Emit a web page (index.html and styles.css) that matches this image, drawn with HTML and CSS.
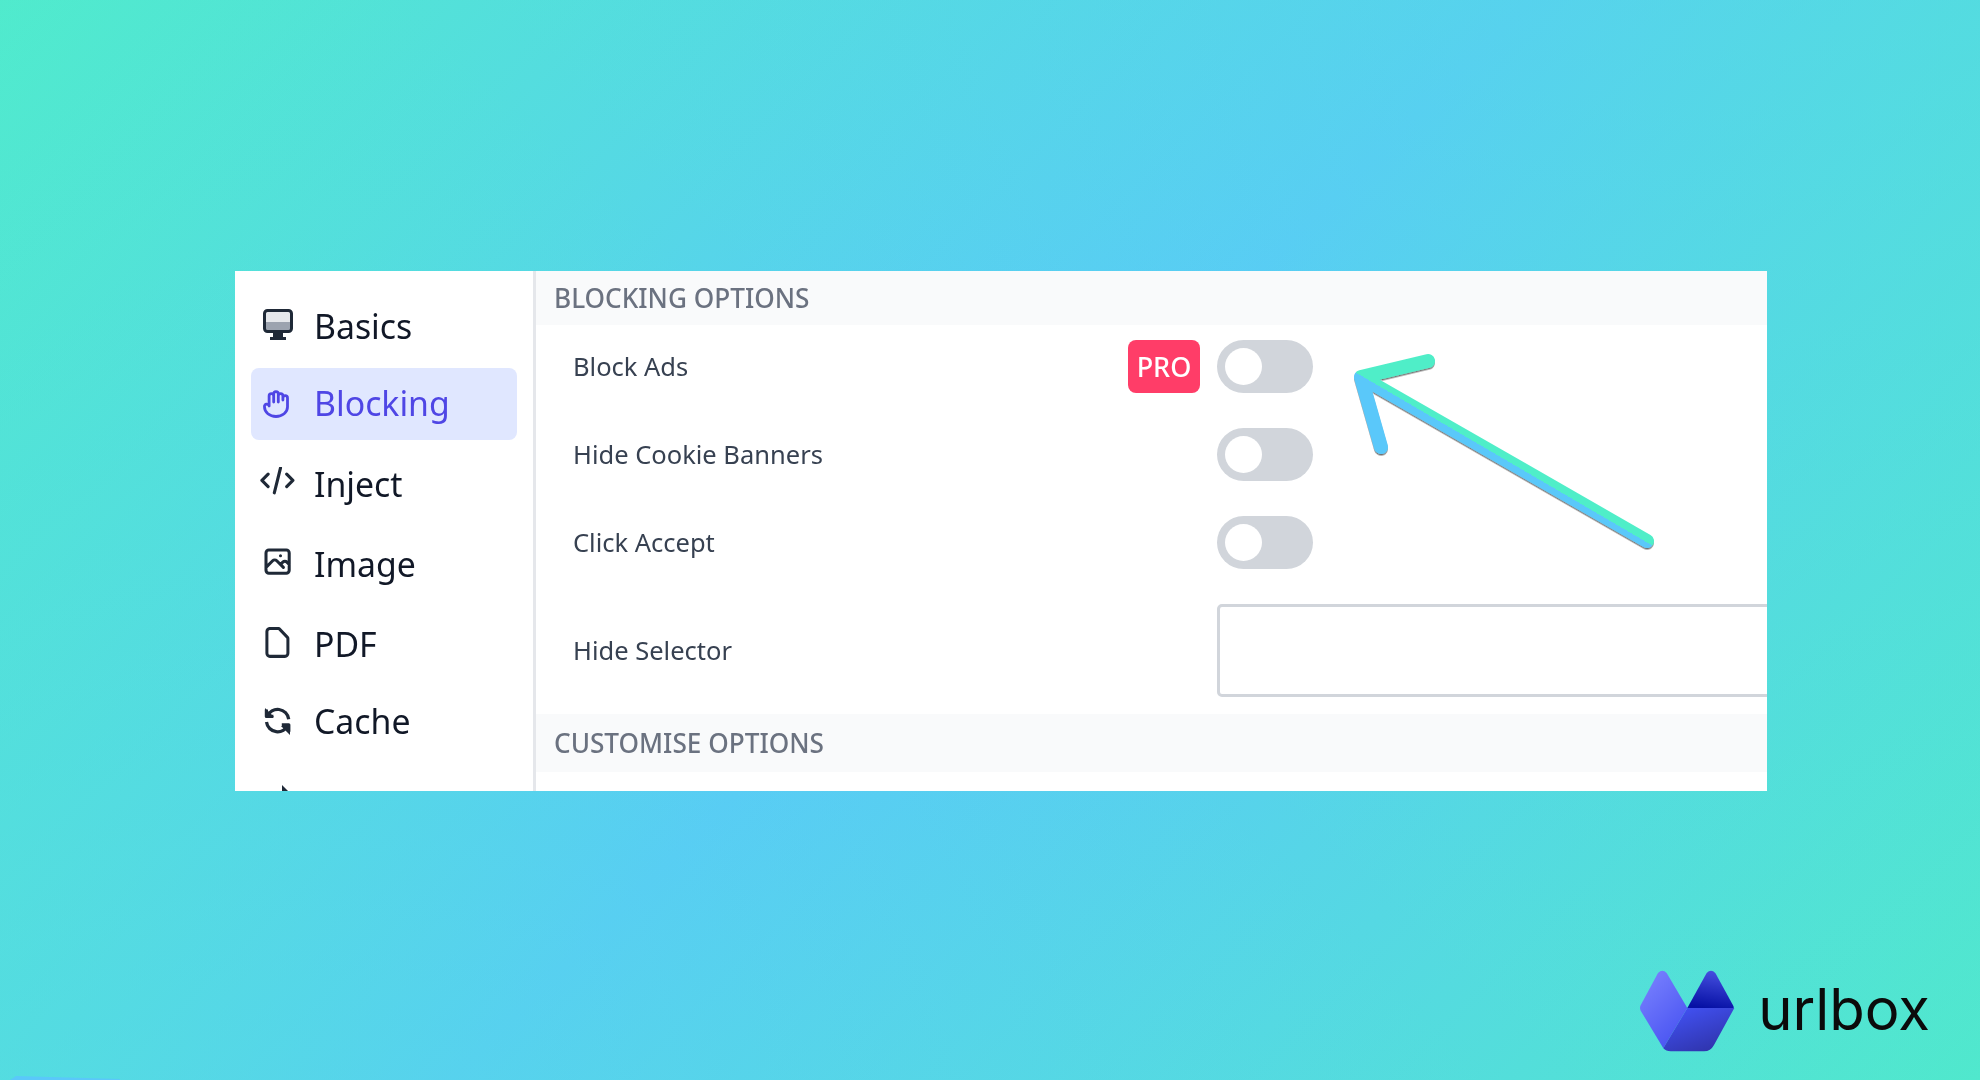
FILE: index.html
```html
<!DOCTYPE html>
<html lang="en">
<head>
    <meta charset="UTF-8">
    <title>Urlbox blocking options</title>
    <link rel="stylesheet" href="styles.css">
</head>
<body>
    <div class="panel">
        <aside class="sidebar">
            <a class="nav-item">
                <svg class="nav-icon" viewBox="0 0 36 36">
                    <rect x="6" y="2" width="26" height="20" rx="2.5" fill="#e5e7eb"/>
                    <rect x="6" y="13" width="26" height="9" fill="#9ca3af"/>
                    <rect x="5.5" y="1.5" width="27" height="21" rx="3" fill="none" stroke="#1f2937" stroke-width="3"/>
                    <path d="M14 24h10v4h3v3H11v-3h3z" fill="#1f2937"/>
                </svg>
                <span>Basics</span>
            </a>
            <a class="nav-item active gap-small">
                <svg class="nav-icon" viewBox="0 0 36 36">
                    <path fill="none" stroke="currentColor" stroke-width="2.8" stroke-linecap="round" stroke-linejoin="round" d="M5.5 21a11.500 9.500 0 0023 0V12a2.300 2.300 0 00-4.600 0M5.500 21a2.300 2.300 0 014.600-1V10a2.300 2.300 0 014.600 0M14.700 10V8a2.300 2.300 0 014.600 0v2a2.300 2.300 0 014.600 0v4M14.700 10v6M19.300 9v7"/>
                </svg>
                <span>Blocking</span>
            </a>
            <a class="nav-item gap-large">
                <svg class="nav-icon" viewBox="0 0 36 36">
                    <path transform="translate(-0.2 -5.2) scale(1.55)" fill="none" stroke="#1f2937" stroke-width="2" stroke-linecap="round" stroke-linejoin="round" d="M10 20l4-16m4 4l4 4-4 4M6 16l-4-4 4-4"/>
                </svg>
                <span>Inject</span>
            </a>
            <a class="nav-item">
                <svg class="nav-icon" viewBox="0 0 36 36">
                    <path transform="translate(1.2 -2.8) scale(1.45)" fill="none" stroke="#1f2937" stroke-width="2.1" stroke-linecap="round" stroke-linejoin="round" d="M4 16l4.586-4.586a2 2 0 012.828 0L16 16m-2-2l1.586-1.586a2 2 0 012.828 0L20 14m-6-6h.01M6 20h12a2 2 0 002-2V6a2 2 0 00-2-2H6a2 2 0 00-2 2v12a2 2 0 002 2z"/>
                </svg>
                <span>Image</span>
            </a>
            <a class="nav-item">
                <svg class="nav-icon" viewBox="0 0 36 36">
                    <path transform="translate(0.4 -3.15) scale(1.5 1.55)" fill="none" stroke="#1f2937" stroke-width="2" stroke-linecap="round" stroke-linejoin="round" d="M7 21h10a2 2 0 002-2V9.414a1 1 0 00-.293-.707l-5.414-5.414A1 1 0 0012.586 3H7a2 2 0 00-2 2v14a2 2 0 002 2z"/>
                </svg>
                <span>PDF</span>
            </a>
            <a class="nav-item gap-small">
                <svg class="nav-icon" viewBox="0 0 36 36">
                    <path transform="translate(1.8 -0.2) scale(1.4)" fill="none" stroke="#1f2937" stroke-width="2.3" stroke-linejoin="round" d="M4 4v5h.582m15.356 2A8.001 8.001 0 004.582 9m0 0H9m11 11v-5h-.581m0 0a8.003 8.003 0 01-15.357-2m15.357 2H15"/>
                    <path d="M6 4l9 9H6zM31 31l-9-9h9z" fill="#1f2937"/>
                </svg>
                <span>Cache</span>
            </a>
            <a class="nav-item gap-last">
                <svg class="nav-icon" viewBox="0 0 36 36">
                    <path d="M23 2l6 6h-6z" fill="#1f2937"/>
                </svg>
            </a>
        </aside>

        <main class="content">
            <h3 class="section-title">BLOCKING OPTIONS</h3>
            <div class="fields">
                <div class="field">
                    <div class="field-label">
                        <label>Block Ads</label>
                        <span class="pro-badge">PRO</span>
                    </div>
                    <div class="toggle"></div>
                </div>
                <div class="field">
                    <div class="field-label"><label>Hide Cookie Banners</label></div>
                    <div class="toggle"></div>
                </div>
                <div class="field">
                    <div class="field-label"><label>Click Accept</label></div>
                    <div class="toggle"></div>
                </div>
                <div class="field">
                    <div class="field-label"><label>Hide Selector</label></div>
                    <div class="text-input"></div>
                </div>
            </div>
            <h3 class="section-title tall">CUSTOMISE OPTIONS</h3>
        </main>
    </div>

    <footer class="brand">
        <svg class="brand-mark" viewBox="0 0 345 300">
            <defs>
                <linearGradient id="leftFacet" x1="0" y1="0" x2="0.6" y2="1">
                    <stop offset="0" stop-color="#7d85ff"/>
                    <stop offset="1" stop-color="#4a55f2"/>
                </linearGradient>
                <linearGradient id="topFacet" x1="0.6" y1="0" x2="0.4" y2="1">
                    <stop offset="0" stop-color="#4650e0"/>
                    <stop offset="1" stop-color="#0610a4"/>
                </linearGradient>
                <linearGradient id="lowFacet" x1="0.2" y1="0" x2="0.8" y2="1">
                    <stop offset="0" stop-color="#4252f4"/>
                    <stop offset="1" stop-color="#2e32a8"/>
                </linearGradient>
            </defs>
            <path d="M84 42q13-14 26 0L172 147 100 268 32 155q-4-8 0-16z" fill="url(#leftFacet)"/>
            <path d="M230 42q13-14 26 0L309 139q4 8 2 8H172z" fill="url(#topFacet)"/>
            <path d="M172 147H313L252 258q-10 19-30 19H122q-14 0-22-9z" fill="url(#lowFacet)"/>
        </svg>
        <span class="brand-name">urlbox</span>
    </footer>

    <!-- annotation arrow, split along the shaft into two colours -->
    <svg class="overlay" viewBox="0 0 1980 1080">
        <defs>
            <linearGradient id="arrowFill" gradientUnits="userSpaceOnUse" x1="1500.5" y1="465" x2="1507.5" y2="453">
                <stop offset="0.5" stop-color="#5ac8fa"/>
                <stop offset="0.5" stop-color="#50eec8"/>
            </linearGradient>
            <filter id="arrowShadow" x="-10%" y="-10%" width="120%" height="120%">
                <feDropShadow dx="0" dy="1.5" stdDeviation="0.7" flood-color="#000" flood-opacity="0.55"/>
            </filter>
        </defs>
        <path d="M1647 541L1361 377M1428 361L1361 377L1381 447" fill="none" stroke="url(#arrowFill)" stroke-width="14" stroke-linecap="round" stroke-linejoin="round" filter="url(#arrowShadow)"/>
        <!-- sliver in the bottom left corner of the backdrop -->
        <polygon points="10,1080 16,1076 120,1079 120,1080" fill="#5ac8fa"/>
    </svg>
</body>
</html>
```

FILE: styles.css
```css
html, body {
    margin: 0;
    height: 100%;
}
body {
    width: 1980px;
    height: 1080px;
    overflow: hidden;
    position: relative;
    box-sizing: border-box;
    padding: 271px 50px 0 235px;
    font-family: "Noto Sans", "Open Sans", sans-serif;
    background:
        linear-gradient(45deg, rgba(80, 232, 210, 0.45) 0%, rgba(80, 232, 210, 0) 50%, rgba(80, 232, 210, 0.45) 100%),
        linear-gradient(135deg, #50ebcc 0%, #5ac8fa 50%, #50e8cc 100%);
}

/* Panel */
.panel {
    display: flex;
    width: 1532px;
    height: 520px;
    overflow: hidden;
    background-color: #fff;
    filter: blur(0.5px);
}

/* Sidebar */
.sidebar {
    width: 301px;
    flex-shrink: 0;
    box-sizing: border-box;
    padding: 20px 16px 0;
    border-right: 3px solid #e5e7eb;
}
.nav-item {
    display: flex;
    align-items: center;
    gap: 19px;
    height: 72px;
    margin-top: 8px;
    padding-left: 8px;
    border-radius: 8px;
    font-size: 33.8px;
    color: #111827;
}
.nav-item span {
    margin-bottom: 2px;
}
.nav-item:first-child {
    margin-top: 0;
}
.nav-item.gap-small {
    margin-top: 5px;
}
.nav-item.gap-large {
    margin-top: 9px;
}
.nav-item.gap-last {
    margin-top: 7px;
}
.nav-item.active {
    background-color: #e0e7ff;
    color: #4f46e5;
}
.nav-icon {
    width: 36px;
    height: 36px;
    flex-shrink: 0;
}

/* Content */
.content {
    flex: 1;
    min-width: 0;
}
.section-title {
    display: flex;
    align-items: center;
    height: 54px;
    margin: 0;
    padding-left: 18px;
    background-color: #f9fafb;
    font-size: 26.2px;
    font-weight: 500;
    color: #6b7280;
}
.section-title.tall {
    height: 58px;
}
.fields {
    display: flex;
    flex-direction: column;
    gap: 35px;
    padding: 15px 0 17px 37px;
}
.field {
    display: flex;
    align-items: center;
}
.field-label {
    display: flex;
    align-items: center;
    justify-content: space-between;
    width: 627px;
    margin-right: 17px;
    font-size: 25.5px;
    line-height: 34px;
    color: #374151;
    flex-shrink: 0;
}
.field-label label {
    margin-bottom: 2px;
}
.pro-badge {
    display: flex;
    align-items: center;
    justify-content: center;
    width: 72px;
    height: 53px;
    border-radius: 8px;
    background-color: #ff3d68;
    color: #fff;
    font-size: 27px;
    font-weight: 500;
}
.toggle {
    position: relative;
    width: 96px;
    height: 53px;
    border-radius: 27px;
    background-color: #d1d5db;
}
.toggle::after {
    content: "";
    position: absolute;
    top: 8px;
    left: 8px;
    width: 37px;
    height: 37px;
    border-radius: 50%;
    background-color: #fff;
}
.text-input {
    width: 640px;
    height: 93px;
    box-sizing: border-box;
    flex-shrink: 0;
    border: 3px solid #d1d5db;
    border-radius: 5px;
    background-color: #fff;
}

/* Logo */
.brand {
    display: flex;
    align-items: center;
    justify-content: flex-end;
    gap: 13px;
    margin-top: 168px;
}
.brand-mark {
    width: 115px;
    height: 100px;
    flex-shrink: 0;
}
.brand-name {
    font-family: Inter, "Noto Sans", sans-serif;
    font-size: 58px;
    line-height: 100px;
    color: #0b0b0b;
}

.overlay {
    position: absolute;
    top: 0;
    left: 0;
    width: 1980px;
    height: 1080px;
}
```
